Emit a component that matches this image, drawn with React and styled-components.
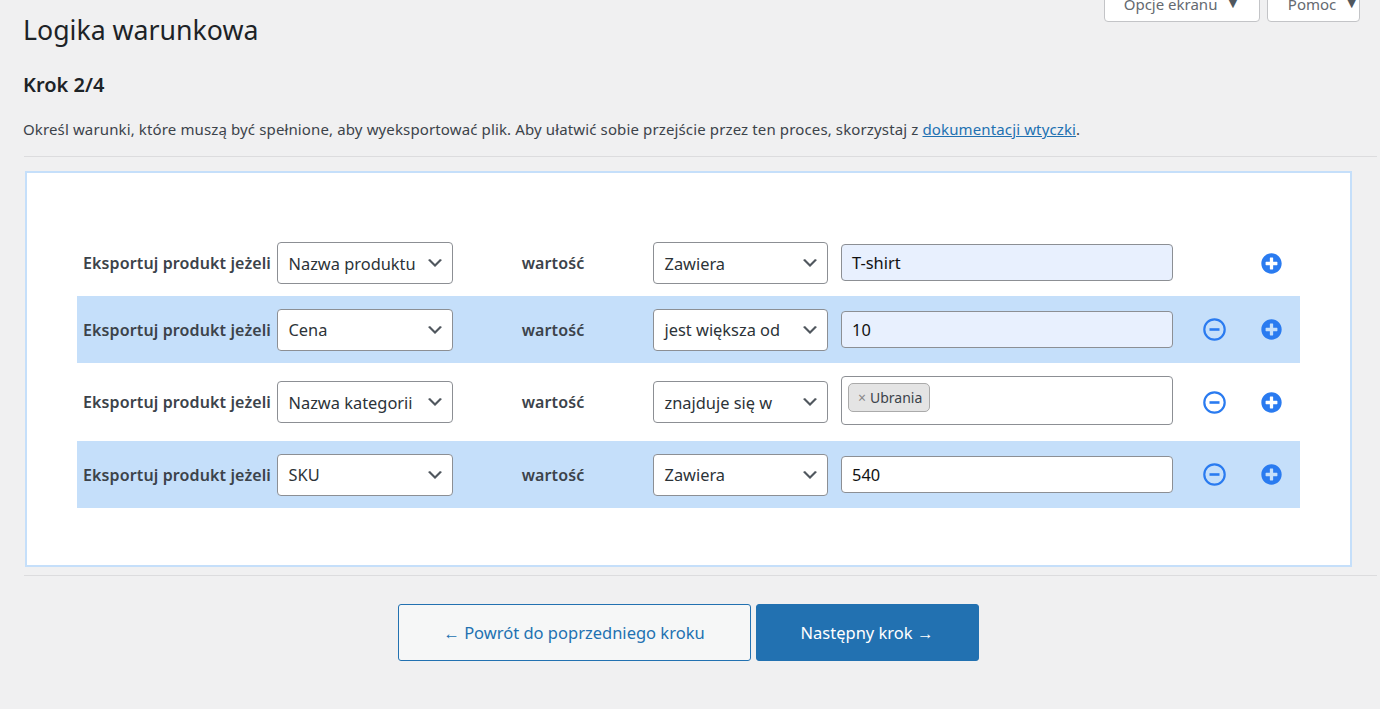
import React from "react";
import styled, { createGlobalStyle } from "styled-components";
import { FaPlusCircle } from "react-icons/fa";

const GlobalStyle = createGlobalStyle`
  html, body {
    margin: 0;
    background: #f0f0f1;
    color: #3c434a;
    font-family: "Noto Sans", "Open Sans", sans-serif;
    overflow: hidden;
  }
`;

const Page = styled.div`
  height: 709px;
  padding: 0 3px 0 23px;
  box-sizing: border-box;
`;

// the tabs hang off the top of the window
const ScreenMeta = styled.div`
  float: right;
  display: flex;
  gap: 7px;
  margin: -15px 17px 0 0;
`;

const MetaButton = styled.div`
  display: flex;
  align-items: center;
  justify-content: center;
  gap: 8px;
  width: ${(p) => p.$width}px;
  height: 37px;
  padding-left: ${(p) => p.$indent || 0}px;
  box-sizing: border-box;
  background: #fff;
  border: 1px solid #c3c4c7;
  border-radius: 0 0 4px 4px;
  color: #646970;
  font-size: 15px;
  span {
    margin-top: -3px;
    font-size: 15px;
    color: #50575e;
  }
`;

const Title = styled.h1`
  margin: 0;
  padding-top: 13px;
  font-size: 26.7px;
  line-height: 33px;
  font-weight: 400;
  color: #1d2327;
`;

const Step = styled.h2`
  margin: 26px 0 0;
  font-size: 20px;
  line-height: 26px;
  font-weight: 600;
  color: #1d2327;
`;

const Intro = styled.p`
  margin: 21px 0 0;
  font-size: 15px;
  line-height: 20px;
  color: #3c434a;
  letter-spacing: 0.13px;
  a {
    color: #2271b1;
  }
`;

const Divider = styled.hr`
  margin: ${(p) => p.$top}px 0 0 1px;
  border: 0;
  border-top: 1px solid #dcdcde;
`;

const Card = styled.div`
  margin: 14px 25px 0 2px;
  padding: 57px 50px;
  background: #fff;
  border: 2px solid #c5dffa;
`;

const Row = styled.div`
  display: grid;
  grid-template-columns: 200px 176px 200px 175px 358px 56px 58px;
  align-items: center;
  height: ${(p) => p.$height}px;
  background: ${(p) => (p.$striped ? "#c5dffa" : "transparent")};
`;

const RowLabel = styled.div`
  padding-left: 6px;
  font-size: 16px;
  font-weight: 600;
  color: #3c434a;
  white-space: nowrap;
  letter-spacing: 0.12px;
`;

const ValueLabel = styled(RowLabel)`
  padding: 0;
  text-align: center;
`;

const SelectBox = styled.div`
  display: flex;
  align-items: center;
  justify-content: space-between;
  height: 42px;
  padding: 0 7px 0 10.5px;
  box-sizing: border-box;
  background: #fff;
  border: 1px solid #8c8f94;
  border-radius: 4px;
  font-size: 16.4px;
  color: #2c3338;
  white-space: nowrap;
  svg {
    flex: none;
    width: 20px;
    height: 20px;
    fill: #50575e;
  }
`;

const InputCell = styled.div`
  margin: 0 13px ${(p) => p.$lift || 0}px;
`;

const TextInput = styled.div`
  display: flex;
  align-items: center;
  height: 37px;
  padding: 0 10px;
  box-sizing: border-box;
  background: ${(p) => (p.$filled ? "#e8f0fe" : "#fff")};
  border: 1px solid #8c8f94;
  border-radius: 4px;
  font-size: 16.4px;
  color: #111;
`;

const TagInput = styled.div`
  display: flex;
  align-items: flex-start;
  height: 49px;
  padding: 6px;
  box-sizing: border-box;
  background: #fff;
  border: 1px solid #8c8f94;
  border-radius: 4px;
`;

const Tag = styled.div`
  display: flex;
  align-items: center;
  gap: 4px;
  height: 29px;
  padding: 0 7px 0 9px;
  box-sizing: border-box;
  background: #e4e4e4;
  border: 1px solid #aaa;
  border-radius: 5px;
  font-size: 14px;
  color: #3c434a;
  span {
    color: #888;
    font-size: 14px;
  }
`;

const IconCell = styled.div`
  display: flex;
  justify-content: center;
  align-items: center;
  color: #2a7bf0;
  font-size: ${(p) => p.$size}px;
`;

const Actions = styled.div`
  display: flex;
  justify-content: center;
  gap: 5px;
  margin-top: 28px;
  padding-right: 24px;
`;

const StepButton = styled.div`
  display: flex;
  align-items: center;
  justify-content: center;
  width: ${(p) => p.$width}px;
  height: 57px;
  box-sizing: border-box;
  background: ${(p) => (p.$primary ? "#2271b1" : "#f6f7f7")};
  border: 1px solid #2271b1;
  border-radius: 3px;
  color: ${(p) => (p.$primary ? "#fff" : "#2271b1")};
  font-size: 16.5px;
`;

const Chevron = () => (
  <svg viewBox="0 0 20 20">
    <path d="M5 6l5 5 5-5 2 1-7 7-7-7 2-1z" />
  </svg>
);

const MinusCircle = () => (
  <svg width="23" height="23" viewBox="0 0 23 23" fill="none">
    <circle cx="11.5" cy="11.5" r="10.2" stroke="currentColor" strokeWidth="2.2" />
    <path d="M6.5 11.5h10" stroke="currentColor" strokeWidth="2.6" />
  </svg>
);

const rows = [
  { field: "Nazwa produktu", cond: "Zawiera", value: "T-shirt", filled: true, height: 66, lift: 1, removable: false },
  { field: "Cena", cond: "jest większa od", value: "10", filled: true, height: 67, striped: true, removable: true },
  { field: "Nazwa kategorii", cond: "znajduje się w", tag: "Ubrania", height: 78, lift: 4, removable: true },
  { field: "SKU", cond: "Zawiera", value: "540", height: 67, striped: true, removable: true },
];

export default function App() {
  return (
    <Page>
      <GlobalStyle />
      <ScreenMeta>
        <MetaButton $width={156}>
          Opcje ekranu <span>▼</span>
        </MetaButton>
        <MetaButton $width={93} $indent={20}>
          Pomoc <span>▼</span>
        </MetaButton>
      </ScreenMeta>
      <Title>Logika warunkowa</Title>
      <Step>Krok 2/4</Step>
      <Intro>
        Określ warunki, które muszą być spełnione, aby wyeksportować plik. Aby ułatwić sobie
        przejście przez ten proces, skorzystaj z <a href="#docs">dokumentacji wtyczki</a>.
      </Intro>
      <Divider $top={17} />
      <Card>
        {rows.map((row) => (
          <Row key={row.field} $height={row.height} $striped={row.striped}>
            <RowLabel>Eksportuj produkt jeżeli</RowLabel>
            <SelectBox>
              {row.field}
              <Chevron />
            </SelectBox>
            <ValueLabel>wartość</ValueLabel>
            <SelectBox>
              {row.cond}
              <Chevron />
            </SelectBox>
            <InputCell $lift={row.lift}>
              {row.tag ? (
                <TagInput>
                  <Tag>
                    <span>×</span>
                    {row.tag}
                  </Tag>
                </TagInput>
              ) : (
                <TextInput $filled={row.filled}>{row.value}</TextInput>
              )}
            </InputCell>
            <IconCell>{row.removable && <MinusCircle />}</IconCell>
            <IconCell $size={21}>
              <FaPlusCircle />
            </IconCell>
          </Row>
        ))}
      </Card>
      <Divider $top={8} />
      <Actions>
        <StepButton $width={353}>← Powrót do poprzedniego kroku</StepButton>
        <StepButton $width={223} $primary>
          Następny krok →
        </StepButton>
      </Actions>
    </Page>
  );
}
